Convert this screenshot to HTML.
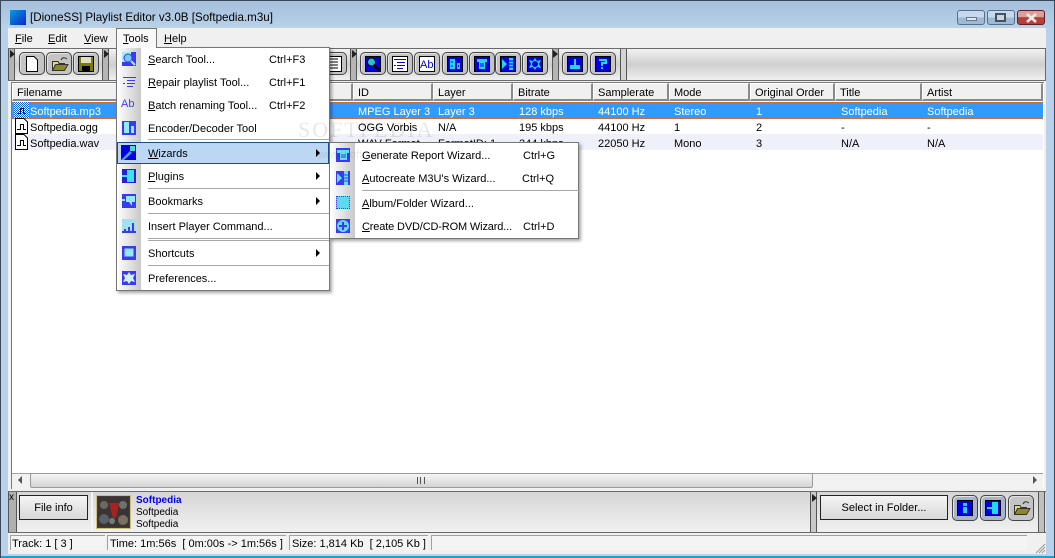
<!DOCTYPE html>
<html><head><meta charset="utf-8"><style>
html,body{margin:0;padding:0;width:1055px;height:558px;overflow:hidden}
body{position:relative;background:#b9d1ea;font-family:"Liberation Sans",sans-serif;font-size:11px;color:#000}
div,span,svg{position:absolute;box-sizing:border-box}
u{text-decoration:underline}
.t{white-space:nowrap;line-height:14px;height:14px;margin-top:1px}
.hd{top:83px;height:18px;background:#f0f0f0;border:1px solid #fff;border-right:2px solid #8a8a8a;border-bottom:2px solid #8a8a8a;padding:3px 0 0 4px;white-space:nowrap;line-height:13px}
.btn{width:26px;height:23px;top:52px;border:1px solid #444;border-radius:5px;background:#c4c4c4;box-shadow:inset 1px 1px 0 #e4e4e4}
.btn svg{left:4px;top:3px}
.mi{left:148px}
.ms{left:269px}
.ar{width:0;height:0;border-left:4px solid #000;border-top:4px solid transparent;border-bottom:4px solid transparent}
.sep{height:1px;background:#a8a8a8}
.w{color:#fff}
.hb{width:0;height:0;border-left:5px solid #222;border-top:4px solid transparent;border-bottom:4px solid transparent}
.grip{width:7px;background:#b5b5b5;border-left:1px solid #555;border-right:1px solid #555}
</style></head><body>
<div style="left:0;top:0;width:1055px;height:28px;background:linear-gradient(#a5bfdc,#b9d1ea);border-top:1px solid #3a4a5c"></div>
<div style="left:0;top:556px;width:1055px;height:2px;background:#1ea0c8"></div>
<div style="left:0;top:0;width:1px;height:558px;background:#3a4a5c"></div>
<div style="left:1054px;top:0;width:1px;height:558px;background:#3a4a5c"></div>

<div style="left:10px;top:10px;width:16px;height:15px;background:linear-gradient(135deg,#0a9ad8,#0a2ad0)"></div>
<div class="t" style="left:30px;top:10px;font-size:11.6px">[DioneSS] Playlist Editor v3.0B [Softpedia.m3u]</div>

<div style="left:957px;top:10px;width:28px;height:15px;border:1px solid #56708c;border-radius:3px;background:linear-gradient(#c6d8ea 50%,#9db9d6 50%)"><div style="left:8px;top:6px;width:11px;height:4px;background:#e4e9ee;border:1px solid #66788a"></div></div>
<div style="left:987px;top:10px;width:28px;height:15px;border:1px solid #56708c;border-radius:3px;background:linear-gradient(#c6d8ea 50%,#9db9d6 50%)"><div style="left:7px;top:2px;width:11px;height:9px;border:2px solid #45525f;background:#c8d6e4"></div></div>
<div style="left:1017px;top:10px;width:28px;height:15px;border:1px solid #5c1f24;border-radius:3px;background:linear-gradient(#dca09a 45%,#b5403a 50%)"><svg style="left:7px;top:2px" width="13" height="10"><path d="M2 1L11 9M11 1L2 9" stroke="#f0e8e8" stroke-width="2.600"/></svg></div>

<div style="left:8px;top:28px;width:1038px;height:526px;background:#f0f0f0"></div>

<div class="t" style="left:15px;top:31px"><u>F</u>ile</div>
<div class="t" style="left:48px;top:31px"><u>E</u>dit</div>
<div class="t" style="left:84px;top:31px"><u>V</u>iew</div>
<div class="t" style="left:164px;top:31px"><u>H</u>elp</div>

<div style="left:8px;top:48px;width:1038px;height:33px;border:1px solid #6a6a6a;background:linear-gradient(#f2f2f2,#cfcfcf 50%,#f0f0f0)"></div>
<div class="grip" style="left:8px;top:49px;height:31px"></div>
<div class="hb" style="left:10px;top:50px"></div>
<div class="btn" style="left:19px"><svg width="16" height="16"><path d="M2.500 .5H10L13.500 4V15.500H2.500Z" fill="#fff" stroke="#000"/></svg></div>
<div class="btn" style="left:46px"><svg width="18" height="16"><path d="M1.500 14.500V5.500H7L8 7.500H13.500V14.500Z" fill="#e8d878" stroke="#333"/><path d="M1.500 14.500L4.500 8.500H17L13.500 14.500Z" fill="#8a8a20" stroke="#333"/><path d="M10 4Q12 0 16 3" fill="none" stroke="#333"/></svg></div>
<div class="btn" style="left:73px"><svg width="16" height="16"><rect x=".5" y=".5" width="15" height="15" fill="#7a7a10" stroke="#000"/><rect x="3" y="1" width="10" height="6" fill="#e0e0c0"/><rect x="4" y="10" width="8" height="5" fill="#000"/></svg></div>
<div class="grip" style="left:102px;top:49px;height:31px"></div>
<div class="hb" style="left:104px;top:50px"></div>
<div class="btn" style="left:321px"><svg width="16" height="16"><rect x=".5" y=".5" width="15" height="15" fill="#fff" stroke="#000"/><path d="M4 3H12M4 6H12M4 9H12M4 12H12" stroke="#000"/></svg></div>

<div class="grip" style="left:350px;top:49px;height:31px"></div>
<div class="hb" style="left:352px;top:50px"></div>
<div class="btn" style="left:360px"><svg width="16" height="16"><rect x=".5" y=".5" width="15" height="15" fill="#0000d8" stroke="#000"/><circle cx="6.500" cy="6" r="4" fill="#20c8c0" stroke="#000"/><path d="M9 9L14 14" stroke="#000" stroke-width="2"/></svg></div>
<div class="btn" style="left:387px"><svg width="16" height="16"><rect x=".5" y=".5" width="15" height="15" fill="#fff" stroke="#000"/><path d="M2 3.500H14M5 6.500H13M2 9.500H4M5 9.500H13M5 12.500H11" stroke="#0000e0"/></svg></div>
<div class="btn" style="left:414px"><svg width="16" height="16"><rect x=".5" y=".5" width="15" height="15" fill="#fff" stroke="#000"/><text x="1" y="12" font-size="11" fill="#0000e0" font-family="Liberation Sans">Ab</text></svg></div>
<div class="btn" style="left:442px"><svg width="16" height="16"><rect x=".5" y=".5" width="15" height="15" fill="#0000e0" stroke="#000"/><path d="M3 3H8V13H3ZM10 7H13V13H10Z" fill="#20d8e8"/><path d="M5 5V7M5 9V11M11.500 9V11" stroke="#0000e0"/></svg></div>
<div class="btn" style="left:469px"><svg width="16" height="16"><rect x=".5" y=".5" width="15" height="15" fill="#0000e0" stroke="#000"/><path d="M3 3H13V6H11V13H5V6H3Z" fill="#20d8e8"/><path d="M6 8H10M6 10H10" stroke="#0000e0"/></svg></div>
<div class="btn" style="left:495px"><svg width="16" height="16"><rect x=".5" y=".5" width="15" height="15" fill="#0000e0" stroke="#000"/><path d="M2 3L7 8L2 13Z" fill="#20d8e8"/><path d="M9 2H13V14H9Z" fill="#20d8e8"/><path d="M9 5H13M9 8H13M9 11H13" stroke="#0000e0"/></svg></div>
<div class="btn" style="left:522px"><svg width="16" height="16"><rect x=".5" y=".5" width="15" height="15" fill="#0000e0" stroke="#000"/><path d="M8 2L10 5L14 4L12 8L14 12L10 11L8 14L6 11L2 12L4 8L2 4L6 5Z" fill="#20d8e8"/><circle cx="8" cy="8" r="3" fill="#0000e0"/></svg></div>
<div class="grip" style="left:552px;top:49px;height:31px"></div>
<div class="hb" style="left:553px;top:50px"></div>
<div class="btn" style="left:562px"><svg width="16" height="16"><rect x=".5" y=".5" width="15" height="15" fill="#0000e0" stroke="#000"/><path d="M3 9H13V13H3Z" fill="#20d8e8"/><path d="M7 3H9V9H7Z" fill="#20d8e8"/></svg></div>
<div class="btn" style="left:590px"><svg width="16" height="16"><rect x=".5" y=".5" width="15" height="15" fill="#0000e0" stroke="#000"/><path d="M4 3H12V8H8V10H6V6H10V5H4ZM6 11H8V13H6Z" fill="#20d8e8"/></svg></div>
<div class="grip" style="left:620px;top:49px;height:31px;background:#d4d4d4"></div>

<!-- list -->
<div style="left:11px;top:82px;width:1033px;height:407px;background:#fff;border-left:1px solid #7a7a7a;border-top:1px solid #7a7a7a"></div>
<div class="hd" style="left:12px;width:341px">Filename</div>
<div class="hd" style="left:353px;width:80px">ID</div>
<div class="hd" style="left:433px;width:80px">Layer</div>
<div class="hd" style="left:513px;width:80px">Bitrate</div>
<div class="hd" style="left:593px;width:76px">Samplerate</div>
<div class="hd" style="left:669px;width:81px">Mode</div>
<div class="hd" style="left:750px;width:85px">Original Order</div>
<div class="hd" style="left:835px;width:87px">Title</div>
<div class="hd" style="left:922px;width:121px">Artist</div>

<div style="left:12px;top:102px;width:1031px;height:17px;background:#3399ff;border-top:1px dotted #c07030;border-bottom:1px dotted #c07030"></div>
<div style="left:12px;top:134px;width:1031px;height:16px;background:#f0f0fa"></div>

<svg style="left:14px;top:102px" width="15" height="16"><defs><pattern id="c" width="2" height="2" patternUnits="userSpaceOnUse"><rect width="2" height="2" fill="#fff"/><rect width="1" height="1" fill="#1060d0"/><rect x="1" y="1" width="1" height="1" fill="#1060d0"/></pattern></defs><rect width="15" height="16" fill="url(#c)"/><path d="M3 11.500H6.500V6.500H9.500V11.500H12" fill="none" stroke="#003"/></svg>
<svg style="left:14px;top:118px" width="15" height="16"><path d="M1.500 .5H10L13.500 4V15.500H1.500Z" fill="#fff" stroke="#000"/><path d="M3 11.500H6.500V6.500H9.500V11.500H12" fill="none" stroke="#000"/></svg>
<svg style="left:14px;top:134px" width="15" height="16"><path d="M1.500 .5H10L13.500 4V15.500H1.500Z" fill="#fff" stroke="#000"/><path d="M3 11.500H6.500V6.500H9.500V11.500H12" fill="none" stroke="#000"/></svg>

<div class="t w" style="left:30px;top:104px">Softpedia.mp3</div>
<div class="t" style="left:30px;top:120px">Softpedia.ogg</div>
<div class="t" style="left:30px;top:136px">Softpedia.wav</div>

<div class="t w" style="left:358px;top:104px">MPEG Layer 3</div>
<div class="t w" style="left:438px;top:104px">Layer 3</div>
<div class="t w" style="left:519px;top:104px">128 kbps</div>
<div class="t w" style="left:598px;top:104px">44100 Hz</div>
<div class="t w" style="left:674px;top:104px">Stereo</div>
<div class="t w" style="left:756px;top:104px">1</div>
<div class="t w" style="left:841px;top:104px">Softpedia</div>
<div class="t w" style="left:927px;top:104px">Softpedia</div>

<div class="t" style="left:358px;top:120px">OGG Vorbis</div>
<div class="t" style="left:438px;top:120px">N/A</div>
<div class="t" style="left:519px;top:120px">195 kbps</div>
<div class="t" style="left:598px;top:120px">44100 Hz</div>
<div class="t" style="left:674px;top:120px">1</div>
<div class="t" style="left:756px;top:120px">2</div>
<div class="t" style="left:841px;top:120px">-</div>
<div class="t" style="left:927px;top:120px">-</div>

<div class="t" style="left:358px;top:136px">WAV Format</div>
<div class="t" style="left:438px;top:136px">FormatID: 1</div>
<div class="t" style="left:519px;top:136px">344 kbps</div>
<div class="t" style="left:598px;top:136px">22050 Hz</div>
<div class="t" style="left:674px;top:136px">Mono</div>
<div class="t" style="left:756px;top:136px">3</div>
<div class="t" style="left:841px;top:136px">N/A</div>
<div class="t" style="left:927px;top:136px">N/A</div>

<!-- scrollbar -->
<div style="left:12px;top:473px;width:1031px;height:16px;background:#f2f2f2;border-top:1px solid #a0a0a0"></div>
<div style="left:30px;top:473px;width:783px;height:15px;border:1px solid #9a9a9a;border-radius:2px;background:linear-gradient(#f4f4f4,#d4d4d4)"></div>
<div style="left:18px;top:476px;width:0;height:0;border-right:4px solid #555;border-top:4px solid transparent;border-bottom:4px solid transparent"></div>
<div style="left:1033px;top:476px;width:0;height:0;border-left:4px solid #555;border-top:4px solid transparent;border-bottom:4px solid transparent"></div>
<div style="left:417px;top:477px;width:8px;height:7px;border-left:1px solid #555;border-right:1px solid #555"><div style="left:2px;top:0;width:1px;height:7px;background:#555"></div></div>

<!-- bottom panel -->
<div style="left:8px;top:491px;width:1038px;height:42px;border-top:1px solid #6a6a6a;border-bottom:1px solid #6a6a6a;background:linear-gradient(#d6d6d6,#f0f0f0)"></div>
<div class="grip" style="left:8px;top:492px;height:40px;width:9px;background:#b0b0b0"></div>
<div class="t" style="left:9px;top:490px;font-size:10px">x</div>
<div style="left:19px;top:495px;width:69px;height:25px;border:1px solid #222;background:linear-gradient(#f5f5f5,#d8d8d8);text-align:center;line-height:25px">File info</div>
<div style="left:91px;top:492px;width:2px;height:40px;background:#f4f4f4"></div>
<div style="left:96px;top:495px;width:35px;height:34px;background:#4a3a3a;border:1px solid #c8c080"></div>
<svg style="left:98px;top:497px" width="31" height="30"><rect width="31" height="30" fill="#3c3434"/><circle cx="6" cy="8" r="4" fill="#6a6a60"/><circle cx="25" cy="8" r="4" fill="#6a7270"/><circle cx="6" cy="22" r="5" fill="#58606a"/><circle cx="25" cy="23" r="5" fill="#787060"/><circle cx="14" cy="24" r="3" fill="#708078"/><path d="M11 6H21L18 21H15Z" fill="#a82222"/></svg>
<div class="t" style="left:136px;top:493px;color:#0000f0;font-weight:bold;font-size:10px">Softpedia</div>
<div class="t" style="left:136px;top:505px;font-size:10px">Softpedia</div>
<div class="t" style="left:136px;top:517px;font-size:10px">Softpedia</div>

<div class="grip" style="left:810px;top:492px;height:40px;background:#c8c8c8"></div>
<div class="hb" style="left:812px;top:494px"></div>
<div style="left:820px;top:495px;width:128px;height:25px;border:1px solid #222;background:linear-gradient(#f5f5f5,#d8d8d8);text-align:center;line-height:25px">Select in Folder...</div>
<div class="btn" style="left:952px;top:495px;height:26px;background:#a8b4c8"><svg style="top:4px" width="16" height="16"><rect x=".5" y=".5" width="15" height="15" fill="#0000e0" stroke="#000"/><path d="M6 3H10V6H6ZM6 7H10V13H6Z" fill="#20d8f8"/></svg></div>
<div class="btn" style="left:980px;top:495px;height:26px;background:#a8b4c8"><svg style="top:4px" width="16" height="16"><rect x=".5" y=".5" width="15" height="15" fill="#0000e0" stroke="#000"/><path d="M2 7H7V2H13V14H7V9H2Z" fill="#20d8f8"/></svg></div>
<div class="btn" style="left:1008px;top:495px;height:26px"><svg style="top:4px" width="18" height="16"><path d="M1.500 14.500V5.500H7L8 7.500H13.500V14.500Z" fill="#e8d878" stroke="#333"/><path d="M1.500 14.500L4.500 8.500H17L13.500 14.500Z" fill="#8a8a20" stroke="#333"/><path d="M10 4Q12 0 16 3" fill="none" stroke="#333"/></svg></div>
<div class="grip" style="left:1038px;top:492px;height:40px;background:#c0c0c0"></div>

<!-- status -->
<div style="left:10px;top:535px;width:95px;height:15px;border-top:1px solid #a0a0a0;border-left:1px solid #a0a0a0;background:#f4f4f4"></div>
<div style="left:107px;top:535px;width:179px;height:15px;border-top:1px solid #a0a0a0;border-left:1px solid #a0a0a0;background:#f4f4f4"></div>
<div style="left:289px;top:535px;width:139px;height:15px;border-top:1px solid #a0a0a0;border-left:1px solid #a0a0a0;background:#f4f4f4"></div>
<div style="left:431px;top:535px;width:596px;height:15px;border-top:1px solid #a0a0a0;border-left:1px solid #a0a0a0;background:#f4f4f4"></div>
<div class="t" style="left:12px;top:536px">Track: 1 [ 3 ]</div>
<div class="t" style="left:110px;top:536px">Time: 1m:56s&nbsp; [ 0m:00s -&gt; 1m:56s ]</div>
<div class="t" style="left:292px;top:536px">Size: 1,814 Kb&nbsp; [ 2,105 Kb ]</div>
<svg style="left:1035px;top:543px" width="11" height="11"><path d="M10 1L1 10M10 4L4 10M10 7L7 10" stroke="#999"/></svg>

<!-- Tools tab -->
<div style="left:116px;top:28px;width:41px;height:20px;background:#f8f8f8;border:1px solid #777;border-bottom:0;z-index:5"></div>
<div class="t" style="left:123px;top:31px;z-index:6"><u>T</u>ools</div>

<!-- Tools menu -->
<div style="left:116px;top:47px;width:214px;height:244px;background:#fff;border:1px solid #777;box-shadow:2px 2px 3px rgba(0,0,0,.35);z-index:4"></div>
<div style="left:117px;top:48px;width:24px;height:242px;background:linear-gradient(90deg,#fff,#c8c8c8);z-index:4"></div>
<div style="left:117px;top:142px;width:212px;height:22px;background:#bcd7f4;border:1px solid #15508c;z-index:5"></div>
<div style="z-index:6;left:0;top:0;width:1055px;height:558px">
<svg style="left:122px;top:52px" width="14" height="14"><rect width="14" height="14" fill="#3a3af0"/><rect x="0" y="0" width="9" height="10" fill="#a0f0f0"/><circle cx="6" cy="6" r="4" fill="#7ac8f0" stroke="#3a3af0"/><path d="M9 9L13 13" stroke="#a0f0f0" stroke-width="2"/></svg>
<svg style="left:122px;top:75px" width="14" height="14"><path d="M1 2.500H14M5 5.500H13M1 8.500H3M5 8.500H13M5 11.500H11" stroke="#3a3af0"/></svg>
<div class="t" style="left:121px;top:96px;color:#4040f0">Ab</div>
<svg style="left:122px;top:121px" width="14" height="14"><rect width="14" height="14" fill="#3a3af0"/><path d="M2 1H7V12H2ZM9 5H12V12H9Z" fill="#90e8f8"/></svg>
<svg style="left:121px;top:145px" width="15" height="15"><rect width="15" height="15" fill="#0000e0"/><path d="M0 15L9 6L11 8L3 15Z" fill="#50a0f0"/><path d="M9 1H14V6H9Z" fill="#50d8d8"/></svg>
<svg style="left:122px;top:169px" width="14" height="14"><rect width="14" height="14" fill="#2020e0"/><path d="M0 6H5V1H12V13H5V8H0Z" fill="#40e0f0"/></svg>
<svg style="left:122px;top:194px" width="14" height="14"><rect width="14" height="14" fill="#3a3af0"/><path d="M4 2H13V8H10V12L7 8H4ZM0 5H3V7H0Z" fill="#90e8f0"/></svg>
<svg style="left:122px;top:219px" width="14" height="14"><rect width="14" height="14" fill="#a0e0f0"/><path d="M0 12H14V14H0ZM2 10H4V12H2ZM6 8H8V12H6ZM10 4H12V12H10Z" fill="#3a3af0"/></svg>
<svg style="left:122px;top:246px" width="14" height="14"><rect width="14" height="14" fill="#3a3af0"/><rect x="2" y="2" width="10" height="9" fill="#90e8f0" stroke="#3a3af0"/></svg>
<svg style="left:122px;top:271px" width="14" height="14"><rect width="14" height="14" fill="#3a3af0"/><path d="M7 1L9 4L13 3L11 7L13 11L9 10L7 13L5 10L1 11L3 7L1 3L5 4Z" fill="#d0f0f8"/></svg>

<div class="t mi" style="top:52px"><u>S</u>earch Tool...</div><div class="t ms" style="top:52px">Ctrl+F3</div>
<div class="t mi" style="top:75px"><u>R</u>epair playlist Tool...</div><div class="t ms" style="top:75px">Ctrl+F1</div>
<div class="t mi" style="top:98px"><u>B</u>atch renaming Tool...</div><div class="t ms" style="top:98px">Ctrl+F2</div>
<div class="t mi" style="top:121px">Encoder/Decoder Tool</div>
<div class="sep" style="left:148px;top:139px;width:181px"></div>
<div class="t mi" style="top:146px"><u>W</u>izards</div><div class="ar" style="left:316px;top:149px"></div>
<div class="sep" style="left:148px;top:188px;width:181px"></div>
<div class="t mi" style="top:169px"><u>P</u>lugins</div><div class="ar" style="left:316px;top:172px"></div>
<div class="sep" style="left:148px;top:213px;width:181px"></div>
<div class="t mi" style="top:194px">Bookmarks</div><div class="ar" style="left:316px;top:197px"></div>
<div class="t mi" style="top:219px">Insert Player Command...</div>
<div class="sep" style="left:148px;top:238px;width:181px"></div>
<div class="sep" style="left:148px;top:240px;width:181px"></div>
<div class="t mi" style="top:246px">Shortcuts</div><div class="ar" style="left:316px;top:249px"></div>
<div class="sep" style="left:148px;top:265px;width:181px"></div>
<div class="t mi" style="top:271px">Preferences...</div>
</div>

<!-- Wizards submenu -->
<div style="left:329px;top:142px;width:250px;height:97px;background:#fff;border:1px solid #777;box-shadow:2px 2px 3px rgba(0,0,0,.35);z-index:7"></div>
<div style="left:330px;top:143px;width:25px;height:95px;background:linear-gradient(90deg,#fff,#c8c8c8);z-index:7"></div>
<div style="z-index:8;left:0;top:0;width:1055px;height:558px">
<svg style="left:336px;top:148px" width="14" height="14"><rect width="14" height="14" fill="#3a3af0"/><path d="M1 2H13V5H11V12H4V5H1Z" fill="#60e0f0"/><path d="M5 7H10M5 9H10" stroke="#3a3af0"/></svg>
<svg style="left:336px;top:171px" width="14" height="14"><rect width="14" height="14" fill="#3a3af0"/><path d="M1 2L6 7L1 12Z" fill="#60e0f0"/><path d="M8 0H12V14H8Z" fill="#60e0f0"/><path d="M8 4H12M8 7H12M8 10H12" stroke="#3a3af0"/></svg>
<div style="left:336px;top:196px;width:14px;height:13px;background:#60d8f0;border:1px dotted #3a3af0"></div>
<svg style="left:336px;top:219px" width="14" height="14"><rect width="14" height="14" fill="#3a3af0"/><circle cx="7" cy="7" r="6" fill="#60d8f0"/><path d="M7 3V11M3 7H11" stroke="#3a3af0" stroke-width="2"/></svg>
<div class="t" style="left:362px;top:148px"><u>G</u>enerate Report Wizard...</div><div class="t" style="left:523px;top:148px">Ctrl+G</div>
<div class="t" style="left:362px;top:171px"><u>A</u>utocreate M3U's Wizard...</div><div class="t" style="left:522px;top:171px">Ctrl+Q</div>
<div class="sep" style="left:362px;top:190px;width:217px"></div>
<div class="t" style="left:362px;top:196px"><u>A</u>lbum/Folder Wizard...</div>
<div class="t" style="left:362px;top:219px;letter-spacing:-.15px"><u>C</u>reate DVD/CD-ROM Wizard...</div><div class="t" style="left:523px;top:219px">Ctrl+D</div>
</div>

<!-- watermark overlay -->
<div class="t" style="left:298px;top:118px;height:22px;font:22px/22px 'Liberation Serif',serif;color:rgba(0,0,0,.09);letter-spacing:2px;z-index:9">SOFTPEDIA</div>
<div class="t" style="left:318px;top:147px;font-size:11px;color:rgba(0,0,0,.08);z-index:9">www.softpedia.com</div>
</body></html>
